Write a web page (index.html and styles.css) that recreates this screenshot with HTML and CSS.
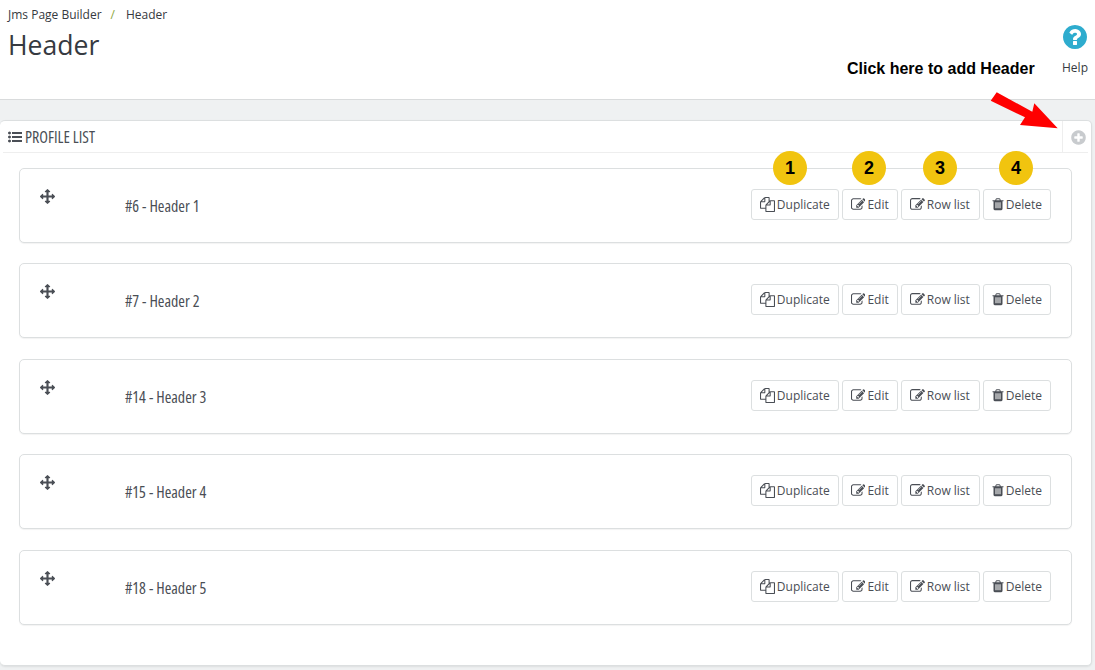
FILE: index.html
```html
<!DOCTYPE html>
<html lang="en">
<head>
<meta charset="utf-8">
<title>Header</title>
<link rel="stylesheet" href="styles.css">
</head>
<body>
<svg class="sprite" aria-hidden="true">
  <symbol id="i-arrows" viewBox="0 0 1792 1792"><path d="M1792 896q0 26-19 45l-256 256q-19 19-45 19t-45-19-19-45v-128h-384v384h128q26 0 45 19t19 45-19 45l-256 256q-19 19-45 19t-45-19l-256-256q-19-19-19-45t19-45 45-19h128v-384h-384v128q0 26-19 45t-45 19-45-19l-256-256q-19-19-19-45t19-45l256-256q19-19 45-19t45 19 19 45v128h384v-384h-128q-26 0-45-19t-19-45 19-45l256-256q19-19 45-19t45 19l256 256q19 19 19 45t-19 45-45 19h-128v384h384v-128q0-26 19-45t45-19 45 19l256 256q19 19 19 45z"/></symbol>
  <symbol id="i-edit" viewBox="0 0 1792 1792"><path d="M888 1184l116-116-152-152-116 116v56h96v96h56zm440-720q-16-16-33 1l-350 350q-17 17-1 33t33-1l350-350q17-17 1-33zm80 594v190q0 119-84.500 203.500t-203.500 84.500h-832q-119 0-203.500-84.500t-84.500-203.500v-832q0-119 84.500-203.500t203.500-84.500h832q63 0 117 25 15 7 18 23 3 17-9 29l-49 49q-14 14-32 8-23-6-45-6h-832q-66 0-113 47t-47 113v832q0 66 47 113t113 47h832q66 0 113-47t47-113v-126q0-13 9-22l64-64q15-15 35-7t20 29zm-96-738l288 288-672 672h-288v-288zm444 132l-92 92-288-288 92-92q28-28 68-28t68 28l152 152q28 28 28 68t-28 68z"/></symbol>
  <symbol id="i-trash" viewBox="128 160 1536 1536"><path d="M704 1376v-704q0-14-9-23t-23-9h-64q-14 0-23 9t-9 23v704q0 14 9 23t23 9h64q14 0 23-9t9-23zm256 0v-704q0-14-9-23t-23-9h-64q-14 0-23 9t-9 23v704q0 14 9 23t23 9h64q14 0 23-9t9-23zm256 0v-704q0-14-9-23t-23-9h-64q-14 0-23 9t-9 23v704q0 14 9 23t23 9h64q14 0 23-9t9-23zm-544-992h448l-48-117q-7-9-17-11h-317q-10 2-17 11zm928 32v64q0 14-9 23t-23 9h-96v948q0 83-47 143.500t-113 60.500h-832q-66 0-113-58.500t-47-141.500v-952h-96q-14 0-23-9t-9-23v-64q0-14 9-23t23-9h309l70-167q15-37 54-63t79-26h320q40 0 79 26t54 63l70 167h309q14 0 23 9t9 23z"/></symbol>
  <symbol id="i-files" viewBox="0 0 1792 1792"><path d="M1696 384q40 0 68 28t28 68v1216q0 40-28 68t-68 28h-960q-40 0-68-28t-28-68v-288h-544q-40 0-68-28t-28-68v-672q0-40 20-88t48-76l408-408q28-28 76-48t88-20h416q40 0 68 28t28 68v328q68-40 128-40h416zm-544 213l-299 299h299v-299zm-640-384l-299 299h299v-299zm196 647l316-316v-416h-384v416q0 40-28 68t-68 28h-416v640h512v-256q0-40 20-88t48-76zm956 804v-1152h-384v416q0 40-28 68t-68 28h-416v640h896z"/></symbol>
  <symbol id="i-help" viewBox="0 0 1792 1792"><path d="M1024 1376v-192q0-14-9-23t-23-9h-192q-14 0-23 9t-9 23v192q0 14 9 23t23 9h192q14 0 23-9t9-23zm256-672q0-88-55.500-163t-138.500-116-170-41q-243 0-371 213-15 24 8 42l132 100q7 6 19 6 16 0 25-12 53-68 86-92 34-24 86-24 48 0 85.500 26t37.500 59q0 38-20 61t-68 45q-63 28-115.500 86.500t-52.500 125.500v36q0 14 9 23t23 9h192q14 0 23-9t9-23q0-19 21.500-49.500t54.500-49.500q32-18 49-28.500t46-35 44.500-48 28-60.500 12.500-81zm384 192q0 209-103 385.500t-279.500 279.500-385.500 103-385.500-103-279.500-279.500-103-385.500 103-385.500 279.500-279.500 385.500-103 385.500 103 279.500 279.500 103 385.500z"/></symbol>
  <symbol id="i-plus" viewBox="0 0 1792 1792"><path d="M1344 960v-128q0-26-19-45t-45-19h-256v-256q0-26-19-45t-45-19h-128q-26 0-45 19t-19 45v256h-256q-26 0-45 19t-19 45v128q0 26 19 45t45 19h256v256q0 26 19 45t45 19h128q26 0 45-19t19-45v-256h256q26 0 45-19t19-45zm320-64q0 209-103 385.500t-279.500 279.500-385.500 103-385.500-103-279.500-279.500-103-385.500 103-385.500 279.500-279.500 385.500-103 385.500 103 279.500 279.500 103 385.500z"/></symbol>
  <symbol id="i-list" viewBox="0 0 1792 1792"><path d="M384 1408q0 80-56 136t-136 56-136-56-56-136 56-136 136-56 136 56 56 136zm0-512q0 80-56 136t-136 56-136-56-56-136 56-136 136-56 136 56 56 136zm1408 416v192q0 13-9.500 22.500t-22.500 9.500h-1216q-13 0-22.500-9.500t-9.500-22.500v-192q0-13 9.500-22.500t22.500-9.500h1216q13 0 22.500 9.500t9.500 22.500zm-1408-928q0 80-56 136t-136 56-136-56-56-136 56-136 136-56 136 56 56 136zm1408 416v192q0 13-9.500 22.500t-22.500 9.500h-1216q-13 0-22.500-9.500t-9.500-22.500v-192q0-13 9.500-22.500t22.500-9.500h1216q13 0 22.500 9.500t9.500 22.500zm0-512v192q0 13-9.500 22.500t-22.500 9.500h-1216q-13 0-22.500-9.500t-9.500-22.500v-192q0-13 9.500-22.500t22.500-9.500h1216q13 0 22.500 9.500t9.500 22.500z"/></symbol>
</svg>

<div class="page">
  <header class="topbar">
    <div class="heading">
      <nav class="crumbs"><span>Jms Page Builder</span><i class="sep">/</i><span>Header</span></nav>
      <h1 class="title">Header</h1>
    </div>
    <a class="help">
      <svg class="help-icon"><use href="#i-help"/></svg>
      <span>Help</span>
    </a>
  </header>

  <main class="content">
    <section class="panel">
      <div class="panel-head">
        <div class="panel-title"><svg class="list-icon"><use href="#i-list"/></svg>PROFILE LIST</div>
        <a class="add"><svg class="add-icon"><use href="#i-plus"/></svg></a>
      </div>
      <ul class="profiles">
        <li class="profile">
          <svg class="drag"><use href="#i-arrows"/></svg>
          <span class="name">#6 - Header 1</span>
          <div class="actions">
            <a class="btn"><svg><use href="#i-files"/></svg>Duplicate</a>
            <a class="btn btn-edit"><svg><use href="#i-edit"/></svg>Edit</a>
            <a class="btn btn-row"><svg><use href="#i-edit"/></svg>Row list</a>
            <a class="btn btn-delete"><svg><use href="#i-trash"/></svg>Delete</a>
          </div>
        </li>
        <li class="profile">
          <svg class="drag"><use href="#i-arrows"/></svg>
          <span class="name">#7 - Header 2</span>
          <div class="actions">
            <a class="btn"><svg><use href="#i-files"/></svg>Duplicate</a>
            <a class="btn btn-edit"><svg><use href="#i-edit"/></svg>Edit</a>
            <a class="btn btn-row"><svg><use href="#i-edit"/></svg>Row list</a>
            <a class="btn btn-delete"><svg><use href="#i-trash"/></svg>Delete</a>
          </div>
        </li>
        <li class="profile">
          <svg class="drag"><use href="#i-arrows"/></svg>
          <span class="name">#14 - Header 3</span>
          <div class="actions">
            <a class="btn"><svg><use href="#i-files"/></svg>Duplicate</a>
            <a class="btn btn-edit"><svg><use href="#i-edit"/></svg>Edit</a>
            <a class="btn btn-row"><svg><use href="#i-edit"/></svg>Row list</a>
            <a class="btn btn-delete"><svg><use href="#i-trash"/></svg>Delete</a>
          </div>
        </li>
        <li class="profile">
          <svg class="drag"><use href="#i-arrows"/></svg>
          <span class="name">#15 - Header 4</span>
          <div class="actions">
            <a class="btn"><svg><use href="#i-files"/></svg>Duplicate</a>
            <a class="btn btn-edit"><svg><use href="#i-edit"/></svg>Edit</a>
            <a class="btn btn-row"><svg><use href="#i-edit"/></svg>Row list</a>
            <a class="btn btn-delete"><svg><use href="#i-trash"/></svg>Delete</a>
          </div>
        </li>
        <li class="profile">
          <svg class="drag"><use href="#i-arrows"/></svg>
          <span class="name">#18 - Header 5</span>
          <div class="actions">
            <a class="btn"><svg><use href="#i-files"/></svg>Duplicate</a>
            <a class="btn btn-edit"><svg><use href="#i-edit"/></svg>Edit</a>
            <a class="btn btn-row"><svg><use href="#i-edit"/></svg>Row list</a>
            <a class="btn btn-delete"><svg><use href="#i-trash"/></svg>Delete</a>
          </div>
        </li>
      </ul>
    </section>
  </main>

  <p class="note">Click here to add Header</p>
  <svg class="arrow" viewBox="0 0 80 45"><polygon points="0.7,8.7 6.7,0.3 42.3,19.7 44.3,11.3 67.7,36.3 30,33 35,25.3"/></svg>
  <span class="step step-1">1</span>
  <span class="step step-2">2</span>
  <span class="step step-3">3</span>
  <span class="step step-4">4</span>
</div>
</body>
</html>
```
FILE: styles.css
```css
* { box-sizing: border-box; }
html, body { margin: 0; padding: 0; }
body {
  background: #eff1f2;
  color: #363a41;
  font-family: "Open Sans", "Liberation Sans", sans-serif;
  font-size: 12px;
}
.sprite { display: none; }
.page { position: relative; width: 1095px; height: 670px; overflow: hidden; }

.topbar {
  display: flex;
  justify-content: space-between;
  height: 100px;
  background: #fff;
  border-bottom: 1px solid #d9dbdc;
  padding: 7px 6px 0 8px;
}
.crumbs { display: flex; font-size: 12px; line-height: 16px; }
.sep { font-style: normal; color: #8ba83e; margin: 0 11px 0 9px; }
.title {
  margin: 6px 0 0;
  font-size: 26.6px;
  font-weight: 400;
  line-height: 32px;
}
.help {
  display: flex;
  flex-direction: column;
  align-items: center;
  padding-top: 16px;
  font-size: 12px;
  line-height: 16px;
}
.help-icon { width: 28px; height: 28px; fill: #2eacce; margin-bottom: 9px; }

.content { padding: 20px 3px 0 0; }
.panel {
  height: 546px;
  background: #fff;
  border: 1px solid #dcdfe0;
  border-left: 0;
  border-radius: 5px;
  box-shadow: 0 1px 2px rgba(0, 0, 0, .08);
  padding: 0 3px;
}
.panel-head {
  display: flex;
  justify-content: space-between;
  height: 32px;
  border-bottom: 1px solid #eeeeee;
}
.panel-title {
  display: flex;
  align-items: center;
  padding: 0 0 0 5px;
  font-size: 16px;
  font-stretch: 75%;
  font-weight: 500;
  color: #4a4e55;
}
.list-icon { width: 14px; height: 14px; fill: #4a4e55; margin-right: 3px; }
.add {
  display: flex;
  align-items: center;
  width: 26px;
  padding: 1px 0 0 7px;
  border-left: 1px solid #eeeeee;
}
.add-icon { width: 17px; height: 17px; fill: #c8cbce; }

.profiles { list-style: none; margin: 14.9px 0 0; padding: 0 0 0 16px; }
.profile {
  position: relative;
  display: flex;
  align-items: center;
  width: 1053px;
  height: 75px;
  margin-bottom: 20.5px;
  padding: 0 20px 0 105px;
  background: #fff;
  border: 1px solid #dcdfe0;
  border-radius: 5px;
  box-shadow: 0 1px 1px rgba(0, 0, 0, .05);
}
.drag { position: absolute; left: 20px; top: 20px; width: 15px; height: 15px; fill: #4a4e55; }
.name {
  flex: 1;
  margin-top: 0.6px;
  font-size: 16px;
  font-stretch: 75%;
  font-weight: 500;
  color: #4a4e55;
}
.actions { display: flex; gap: 3px; margin-top: -2px; }
.btn {
  display: flex;
  align-items: center;
  height: 31px;
  padding: 0 8px;
  border: 1px solid #dcdfe0;
  border-radius: 3px;
  background: #fff;
  color: #4a4e55;
  font-size: 12px;
  white-space: nowrap;
}
.btn svg { width: 15px; height: 15px; margin-right: 2px; fill: #4a4e55; }
.btn-edit { width: 56px; }
.btn-row { width: 79px; }
.btn-delete svg { width: 12px; }

.note {
  position: absolute;
  left: 847px;
  top: 60px;
  margin: 0;
  color: #000;
  font-family: "Liberation Sans", Arial, sans-serif;
  font-size: 16px;
  font-weight: 700;
  line-height: 18px;
}
.arrow { position: absolute; left: 990px; top: 92px; width: 80px; height: 45px; fill: #f00; }
.step {
  position: absolute;
  top: 151px;
  width: 34px;
  height: 34px;
  border-radius: 50%;
  background: #f1c40f;
  color: #000;
  font-family: "Liberation Sans", Arial, sans-serif;
  font-size: 18px;
  font-weight: 700;
  line-height: 34px;
  text-align: center;
}
.step-1 { left: 773px; }
.step-2 { left: 852px; }
.step-3 { left: 923px; }
.step-4 { left: 999px; }
```
